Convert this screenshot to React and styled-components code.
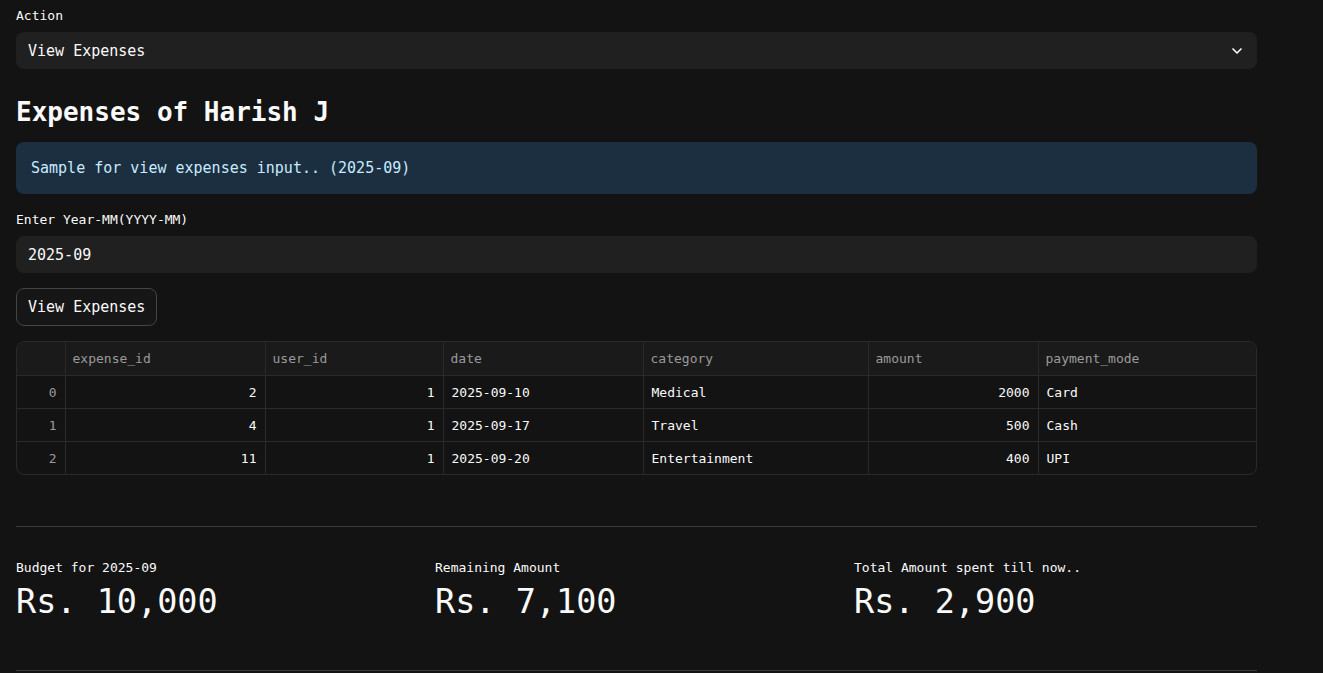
import React from "react";
import styled, { createGlobalStyle } from "styled-components";
import { ChevronDown } from "lucide-react";

const Global = createGlobalStyle`
  html, body {
    margin: 0;
    background: #131313;
    color: #fafafa;
    font-family: "DejaVu Sans Mono", "Liberation Mono", monospace;
  }
`;

const Page = styled.main`
  width: 1241px;
  padding: 8px 16px 0;
  display: flex;
  flex-direction: column;
`;

const Label = styled.div`
  font-size: 13px;
  line-height: 16px;
  color: #fafafa;
  margin-bottom: 8px;
`;

const Field = styled.div`
  height: 37px;
  border-radius: 8px;
  background: #202020;
  display: flex;
  align-items: center;
  justify-content: space-between;
  padding: 0 12px;
  font-size: 15px;
  color: #fafafa;
`;

const Heading = styled.h2`
  margin: 27px 0 14px;
  font-size: 26px;
  line-height: 32px;
  font-weight: 700;
  color: #fafafa;
`;

const Info = styled.div`
  height: 52px;
  border-radius: 8px;
  background: #1c2f41;
  color: #c7ebff;
  display: flex;
  align-items: center;
  padding: 0 15px;
  font-size: 15px;
  margin-bottom: 18px;
`;

const Button = styled.button`
  align-self: flex-start;
  height: 38px;
  padding: 0 11px;
  border-radius: 8px;
  border: 1px solid #454545;
  background: #161616;
  color: #fafafa;
  font-family: inherit;
  font-size: 15px;
  margin: 15px 0 15px;
`;

const TableWrap = styled.div`
  border: 1px solid #2a2a2a;
  border-radius: 8px;
  overflow: hidden;
`;

const Table = styled.table`
  width: 100%;
  border-collapse: collapse;
  table-layout: fixed;
  font-size: 13px;
`;

const Th = styled.th`
  height: 33px;
  background: #1a1a1a;
  color: #9a9a9a;
  font-weight: 400;
  text-align: left;
  padding: 0 7px;
  border-left: 1px solid #2a2a2a;
  border-bottom: 1px solid #2a2a2a;
  &:first-child { border-left: none; }
`;

const Td = styled.td`
  height: 32px;
  padding: 0 8px;
  text-align: ${(p) => (p.$right ? "right" : "left")};
  color: ${(p) => (p.$index ? "#9a9a9a" : "#fafafa")};
  border-left: 1px solid #2a2a2a;
  border-top: 1px solid #2a2a2a;
  &:first-child { border-left: none; }
`;

const Rule = styled.hr`
  border: none;
  border-top: 1px solid #3a3a3a;
  margin: ${(p) => p.$m};
`;

const Metrics = styled.div`
  display: grid;
  grid-template-columns: repeat(3, 1fr);
  gap: 16px;
`;

const Metric = styled.div`
  display: flex;
  flex-direction: column;
`;

const MetricLabel = styled.div`
  font-size: 13px;
  line-height: 16px;
  color: #fafafa;
`;

const MetricValue = styled.div`
  margin-top: 4px;
  font-size: 33.5px;
  line-height: 44px;
  color: #fafafa;
`;

const cols = [48, 200, 178, 200, 225, 170, 220];
const head = ["", "expense_id", "user_id", "date", "category", "amount", "payment_mode"];
const rows = [
  [0, 2, 1, "2025-09-10", "Medical", 2000, "Card"],
  [1, 4, 1, "2025-09-17", "Travel", 500, "Cash"],
  [2, 11, 1, "2025-09-20", "Entertainment", 400, "UPI"],
];

const metrics = [
  ["Budget for 2025-09", "Rs. 10,000"],
  ["Remaining Amount", "Rs. 7,100"],
  ["Total Amount spent till now..", "Rs. 2,900"],
];

export default function App() {
  return (
    <>
      <Global />
      <Page>
        <Label>Action</Label>
        <Field>
          View Expenses
          <ChevronDown size={16} strokeWidth={2.5} color="#fafafa" />
        </Field>
        <Heading>Expenses of Harish J</Heading>
        <Info>Sample for view expenses input.. (2025-09)</Info>
        <Label>Enter Year-MM(YYYY-MM)</Label>
        <Field>2025-09</Field>
        <Button>View Expenses</Button>
        <TableWrap>
          <Table>
            <colgroup>
              {cols.map((w, i) => (
                <col key={i} style={{ width: w }} />
              ))}
            </colgroup>
            <thead>
              <tr>
                {head.map((h, i) => (
                  <Th key={i}>{h}</Th>
                ))}
              </tr>
            </thead>
            <tbody>
              {rows.map((r) => (
                <tr key={r[0]}>
                  {r.map((c, i) => (
                    <Td
                      key={i}
                      $index={i === 0}
                      $right={typeof c === "number"}
                    >
                      {c}
                    </Td>
                  ))}
                </tr>
              ))}
            </tbody>
          </Table>
        </TableWrap>
        <Rule $m="51px 0 33px" />
        <Metrics>
          {metrics.map(([label, value]) => (
            <Metric key={label}>
              <MetricLabel>{label}</MetricLabel>
              <MetricValue>{value}</MetricValue>
            </Metric>
          ))}
        </Metrics>
        <Rule $m="46px 0 0" />
      </Page>
    </>
  );
}
